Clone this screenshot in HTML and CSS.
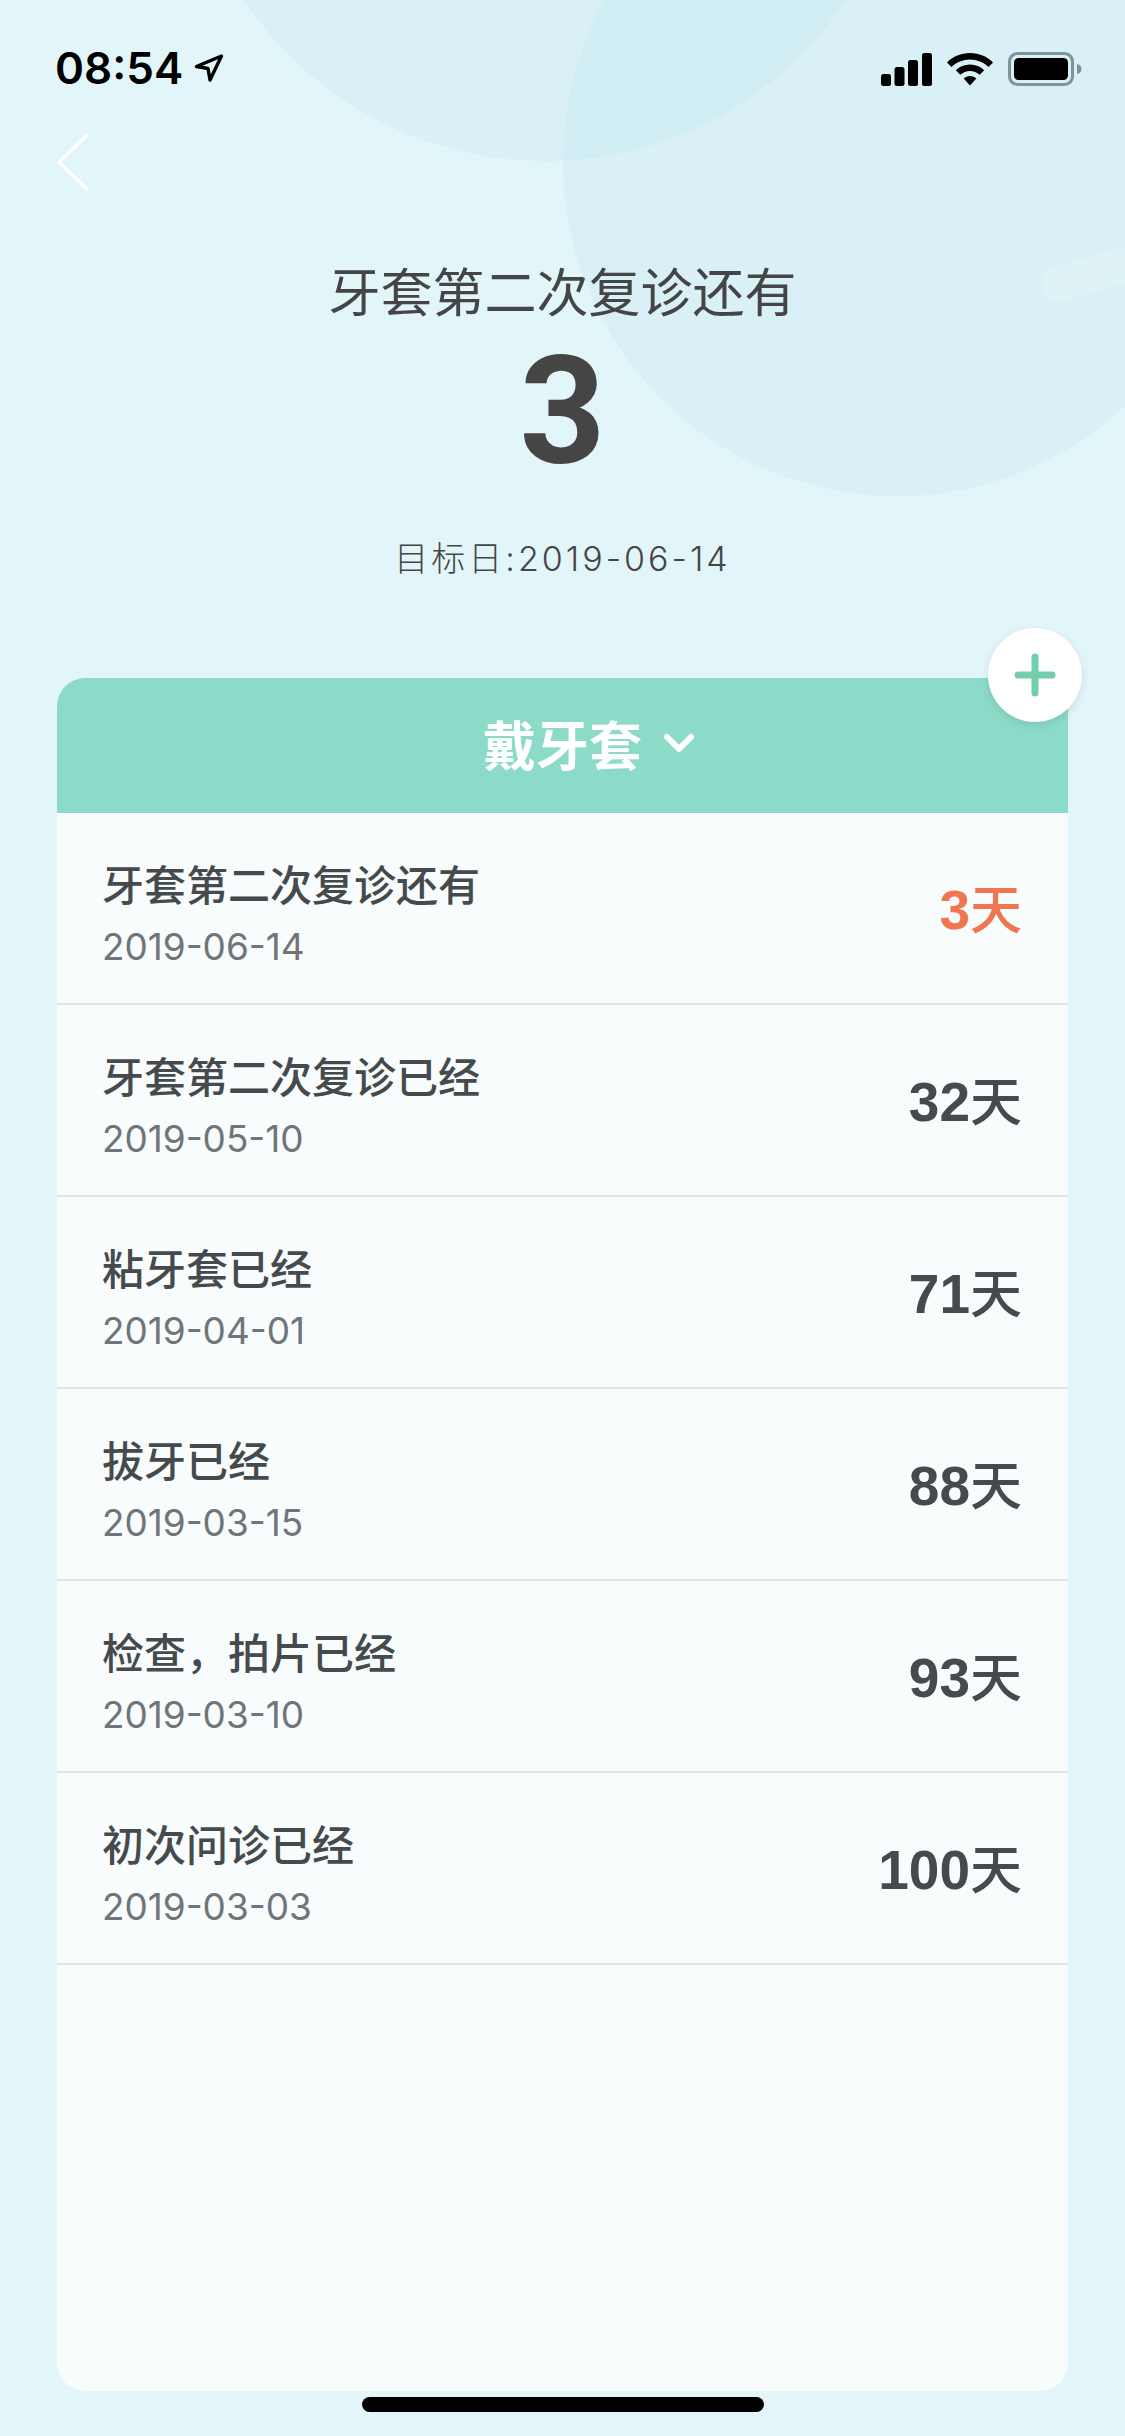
FILE: index.html
```html
<!doctype html>
<html>
<head>
	<title>倒数日</title>
	<meta charset="utf-8">
	<link rel="stylesheet" href="styles.css">
</head>
<body>
	<div class="screen">
		<div class="blob blob-top"></div>
		<div class="blob blob-big"></div>
		<div class="blob-pill"></div>

		<div class="status-bar">
			<div class="status-left">
				<span class="time">08:54</span>
				<svg class="icon-location" width="30" height="30" viewBox="0 0 30 30"><path d="M27.500 3 L2.500 13.500 L14 15.500 L16 27 Z" fill="none" stroke="#000" stroke-width="3.400" stroke-linejoin="round"/></svg>
			</div>
			<div class="status-right">
				<svg width="51" height="33" viewBox="0 0 51 33"><rect x="0" y="21" width="10" height="12" rx="2.500"/><rect x="13.500" y="14" width="10" height="19" rx="2.500"/><rect x="27" y="7" width="10" height="26" rx="2.500"/><rect x="41" y="0" width="10" height="33" rx="2.500"/></svg>
				<svg width="46" height="33" viewBox="0 0 46 33"><path d="M23 0 C32 0 40 3.500 46 9.500 L41.500 14 C36.500 9.300 30 6.500 23 6.500 C16 6.500 9.500 9.300 4.500 14 L0 9.500 C6 3.500 14 0 23 0 Z"/><path d="M23 11.500 C28.500 11.500 33.500 13.700 37.200 17.300 L32.700 21.800 C30 19.300 26.700 18 23 18 C19.300 18 16 19.300 13.300 21.800 L8.800 17.300 C12.500 13.700 17.500 11.500 23 11.500 Z"/><path d="M23 23 C25.500 23 27.700 24 29.300 25.500 L23 32.500 L16.700 25.500 C18.300 24 20.500 23 23 23 Z"/></svg>
				<svg width="74" height="34" viewBox="0 0 74 34"><rect x="1.500" y="1.500" width="63" height="31" rx="8" fill="none" stroke="#7f939c" stroke-width="3"/><rect x="6" y="6" width="54" height="22" rx="4.500"/><path d="M69 12 C72 12.500 73.500 14.500 73.500 17 C73.500 19.500 72 21.500 69 22 Z" fill="#7f939c"/></svg>
			</div>
		</div>

		<div class="nav">
			<svg class="icon-back" width="34" height="60" viewBox="0 0 34 60"><path d="M31 3 L3 30 L31 57" fill="none" stroke="#fff" stroke-width="3.500" stroke-linecap="round" stroke-linejoin="round"/></svg>
		</div>

		<div class="hero">
			<div class="hero-title">牙套第二次复诊还有</div>
			<div class="hero-num">3</div>
			<div class="hero-date">目标日:2019-06-14</div>
		</div>

		<div class="card">
			<div class="card-head">
				<span>戴牙套</span>
				<svg class="icon-down" width="32" height="20" viewBox="0 0 32 20"><path d="M4 4 L16 16 L28 4" fill="none" stroke="#fff" stroke-width="6" stroke-linecap="round" stroke-linejoin="round"/></svg>
			</div>
			<div class="add-btn">
				<svg width="42" height="44" viewBox="0 0 42 44"><path d="M21 4 V40 M4 22 H38" stroke="#72cfab" stroke-width="7" stroke-linecap="round"/></svg>
			</div>
			<div class="row">
				<div>
					<div class="row-title">牙套第二次复诊还有</div>
					<div class="row-date">2019-06-14</div>
				</div>
				<div class="row-days soon"><b>3</b>天</div>
			</div>
			<div class="row">
				<div>
					<div class="row-title">牙套第二次复诊已经</div>
					<div class="row-date">2019-05-10</div>
				</div>
				<div class="row-days"><b>32</b>天</div>
			</div>
			<div class="row">
				<div>
					<div class="row-title">粘牙套已经</div>
					<div class="row-date">2019-04-01</div>
				</div>
				<div class="row-days"><b>71</b>天</div>
			</div>
			<div class="row">
				<div>
					<div class="row-title">拔牙已经</div>
					<div class="row-date">2019-03-15</div>
				</div>
				<div class="row-days"><b>88</b>天</div>
			</div>
			<div class="row">
				<div>
					<div class="row-title">检查，拍片已经</div>
					<div class="row-date">2019-03-10</div>
				</div>
				<div class="row-days"><b>93</b>天</div>
			</div>
			<div class="row">
				<div>
					<div class="row-title">初次问诊已经</div>
					<div class="row-date">2019-03-03</div>
				</div>
				<div class="row-days"><b>100</b>天</div>
			</div>
		</div>

		<div class="home-bar"></div>
	</div>
</body>
</html>
```

FILE: styles.css
```css
* {
	box-sizing: border-box;
}
html, body {
	margin: 0;
	padding: 0;
}
body {
	font-family: Inter, "Noto Sans CJK SC", sans-serif;
}
.screen {
	position: relative;
	width: 1125px;
	height: 2436px;
	overflow: hidden;
	background: #e2f5f8;
	display: flex;
	flex-direction: column;
}

/* background shapes */
.blob {
	position: absolute;
	border-radius: 50%;
	background: rgba(188, 228, 240, 0.27);
}
.blob-top {
	width: 724px;
	height: 724px;
	left: 183px;
	top: -563px;
}
.blob-big {
	width: 668px;
	height: 668px;
	left: 563px;
	top: -172px;
}
.blob-pill {
	position: absolute;
	left: 1040px;
	top: 254px;
	width: 120px;
	height: 36px;
	border-radius: 18px;
	background: rgba(255, 255, 255, 0.2);
	transform: rotate(-16deg);
}

/* status bar */
.status-bar {
	position: relative;
	height: 132px;
	padding: 46px 43px 0 55px;
	display: flex;
	justify-content: space-between;
	align-items: flex-start;
}
.status-left {
	display: flex;
	align-items: center;
	gap: 11px;
}
.time {
	font-size: 44px;
	line-height: 44px;
	font-weight: 600;
	color: #000;
}
.status-right {
	margin-top: 6px;
	display: flex;
	align-items: center;
	gap: 15px;
}
.nav {
	position: relative;
	height: 66px;
	padding-left: 56px;
}
.icon-back {
	display: block;
}

/* top summary */
.hero {
	position: relative;
	height: 480px;
	text-align: center;
	color: #454545;
}
.hero-title {
	margin-top: 57px;
	font-size: 52px;
	line-height: 70px;
	font-family: "Noto Sans CJK SC", sans-serif;
	font-weight: 400;
}
.hero-num {
	margin-top: 12px;
	font-family: Roboto, sans-serif;
	font-weight: 700;
	font-size: 150px;
	line-height: 150px;
}
.hero-date {
	margin-top: 50px;
	font-size: 34px;
	line-height: 44px;
	letter-spacing: 3px;
	font-weight: 300;
}

/* list card */
.card {
	position: relative;
	margin: 0 57px;
	height: 1713px;
	background: #f8fcfd;
	border-radius: 28px;
}
.card-head {
	height: 135px;
	padding: 0 0 6px 53px;
	background: #8cdbc9;
	border-radius: 28px 28px 0 0;
	color: #fff;
	font-size: 53px;
	font-weight: 700;
	font-family: "Noto Sans CJK SC", sans-serif;
	display: flex;
	align-items: center;
	justify-content: center;
	gap: 21px;
}
.add-btn {
	position: absolute;
	right: -14px;
	top: -50px;
	width: 94px;
	height: 94px;
	border-radius: 50%;
	background: #fff;
	box-shadow: 0 3px 8px rgba(0, 0, 0, 0.1);
	display: flex;
	align-items: center;
	justify-content: center;
}
.row {
	height: 192px;
	padding: 8px 46px 0 45px;
	border-bottom: 2px solid #dfe4e5;
	display: flex;
	align-items: center;
	justify-content: space-between;
}
.row-title {
	font-family: "Noto Sans CJK SC", sans-serif;
	font-size: 42px;
	line-height: 56px;
	font-weight: 500;
	color: #454a4d;
}
.row-date {
	margin-top: 14px;
	font-size: 36.900px;
	line-height: 44px;
	color: #6f7578;
}
.row-days {
	padding-bottom: 12px;
	font-family: "Noto Sans CJK SC", sans-serif;
	font-size: 52px;
	font-weight: 500;
	color: #454a4d;
}
.row-days b {
	font-family: "Liberation Sans", sans-serif;
	font-size: 55px;
	font-weight: 700;
}
.soon {
	color: #ef7650;
}
.home-bar {
	position: absolute;
	left: 362px;
	top: 2397px;
	width: 402px;
	height: 15px;
	border-radius: 8px;
	background: #000;
}
```
